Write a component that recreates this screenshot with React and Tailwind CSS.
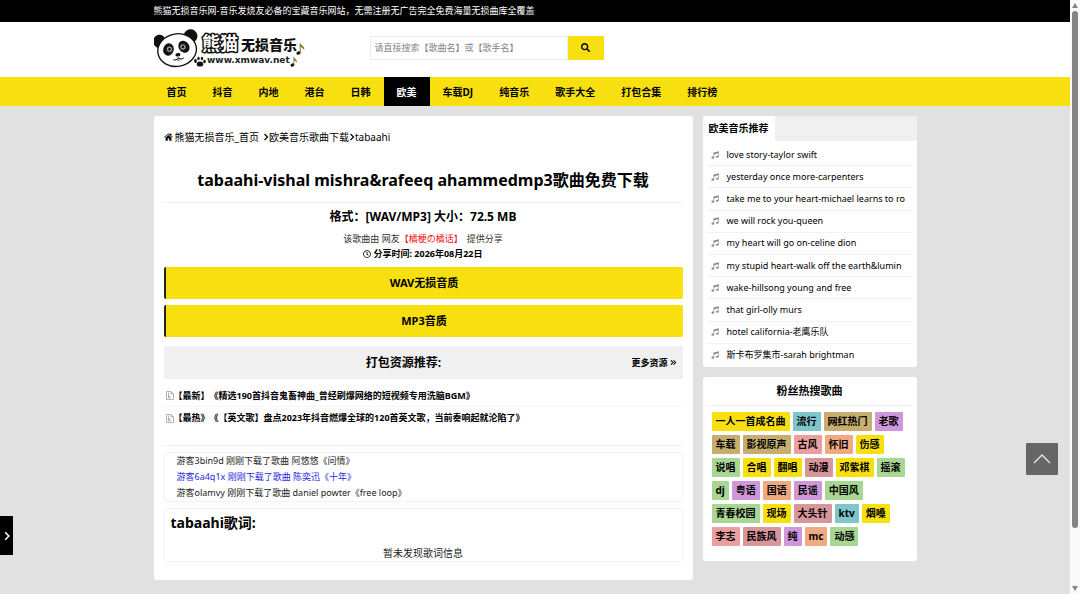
import { useState } from 'react';
import { FaSearch, FaRegClock } from 'react-icons/fa';

const navItems = ['首页', '抖音', '内地', '港台', '日韩', '欧美', '车载DJ', '纯音乐', '歌手大全', '打包合集', '排行榜'];

const packs = [
  '【最新】《精选190首抖音鬼畜神曲_曾经刷爆网络的短视频专用洗脑BGM》',
  '【最热》《【英文歌】盘点2023年抖音燃爆全球的120首英文歌，当前奏响起就沦陷了》',
];

const downloads = [
  { text: '游客3bin9d 刚刚下载了歌曲 阿悠悠《问情》', color: 'text-[#222222]' },
  { text: '游客6a4q1x 刚刚下载了歌曲 陈奕迅《十年》', color: 'text-[#2a1fe0]' },
  { text: '游客olamvy 刚刚下载了歌曲 daniel powter《free loop》', color: 'text-[#222222]' },
];

const songs = [
  'love story-taylor swift',
  'yesterday once more-carpenters',
  'take me to your heart-michael learns to ro',
  'we will rock you-queen',
  'my heart will go on-celine dion',
  'my stupid heart-walk off the earth&lumin',
  'wake-hillsong young and free',
  'that girl-olly murs',
  'hotel california-老鹰乐队',
  '斯卡布罗集市-sarah brightman',
];

const yellow = 'bg-[#f8df0f]';
const teal = 'bg-[#7fc5cc]';
const tan = 'bg-[#c8ae6e]';
const violet = 'bg-[#cf97d9]';
const pink = 'bg-[#eba09f]';
const orange = 'bg-[#efaa82]';
const green = 'bg-[#a8d693]';
const rose = 'bg-[#d8959a]';

const tags = [
  ['一人一首成名曲', yellow], ['流行', teal], ['网红热门', tan], ['老歌', violet],
  ['车载', tan], ['影视原声', tan], ['古风', pink], ['怀旧', orange], ['伤感', yellow],
  ['说唱', green], ['合唱', yellow], ['翻唱', yellow], ['动漫', rose], ['邓紫棋', yellow], ['摇滚', green],
  ['dj', green], ['粤语', violet], ['国语', orange], ['民谣', violet], ['中国风', green],
  ['青春校园', green], ['现场', yellow], ['大头针', rose], ['ktv', teal], ['烟嗓', yellow],
  ['李志', pink], ['民族风', rose], ['纯', violet], ['mc', orange], ['动感', green],
];

function Logo() {
  return (
    <svg viewBox="0 0 154 42" className="h-[42px] w-[154px]" role="img" aria-label="熊猫无损音乐">
      {/* panda head */}
      <g transform="translate(0 -2) scale(1.05) rotate(-10 22 22)">
        <ellipse cx="7" cy="11" rx="6" ry="6.5" fill="#111" />
        <ellipse cx="37" cy="11" rx="6.5" ry="6.5" fill="#111" />
        <ellipse cx="22" cy="22" rx="18.5" ry="15.5" fill="#fff" stroke="#111" strokeWidth="1.3" />
        <ellipse cx="14" cy="20" rx="5" ry="6" fill="#111" transform="rotate(25 14 20)" />
        <ellipse cx="29" cy="20" rx="5" ry="6" fill="#111" transform="rotate(-25 29 20)" />
        <circle cx="15" cy="20" r="2.6" fill="#999" />
        <circle cx="28" cy="20" r="2.6" fill="#999" />
        <circle cx="15" cy="20" r="1.3" fill="#111" />
        <circle cx="28" cy="20" r="1.3" fill="#111" />
        <ellipse cx="22" cy="26.5" rx="2.4" ry="1.7" fill="#111" />
        <path d="M17 30.5q2.5 1.5 5-1q2.5 2.5 5 1" fill="none" stroke="#111" strokeWidth="0.9" />
        <path d="M20 31.3q2 2.2 4 0z" fill="#e2474b" />
      </g>
      {/* paw */}
      <g fill="#111">
        <ellipse cx="46" cy="35" rx="3.3" ry="2.6" />
        <ellipse cx="41.5" cy="32" rx="1.4" ry="1.9" />
        <ellipse cx="44.5" cy="29.5" rx="1.2" ry="1.8" />
        <ellipse cx="48" cy="29.5" rx="1.2" ry="1.8" />
        <ellipse cx="50.5" cy="32.5" rx="1.3" ry="1.7" />
      </g>
      <g fontFamily="'Noto Sans CJK SC', sans-serif">
        <text x="48" y="21" fontSize="18" fontWeight="700" fill="#fff" stroke="#111" strokeWidth="3" strokeLinejoin="round" paintOrder="stroke">熊猫</text>
        <text x="87" y="21" fontSize="14" fontWeight="900" fill="#111">无损音乐</text>
      </g>
      <text x="53" y="34" fontSize="9" fontWeight="700" fontFamily="'DejaVu Sans', sans-serif" fill="#222">www.xmwav.net</text>
      {/* notes */}
      <g fill="#111">
        <ellipse cx="144.5" cy="24" rx="2.2" ry="1.6" transform="rotate(-20 144.5 24)" />
        <path d="M145.7 24V13.500c1 3 5.500 3.500 4.500 8-.5-2-2-3-3.500-3.500V24z" fill="#7a7526" />
        <ellipse cx="138.5" cy="36" rx="2" ry="1.5" transform="rotate(-20 138.5 36)" />
        <path d="M139.5 36v-8.500c1 2.500 4 3 3.300 6.500-.4-1.500-1.400-2.200-2.500-2.600V36z" fill="#7a7526" />
      </g>
    </svg>
  );
}

function HomeIcon() {
  return (
    <svg viewBox="0 0 18 16" className="h-2 w-[9px] shrink-0" fill="#111" aria-hidden="true">
      <path d="M9 4.200l6 5V15a.7.700 0 0 1-.7.700h-3.900v-4.500H7.600v4.500H3.700A.7.700 0 0 1 3 15V9.200z" />
      <path d="M9 .5l3.200 2.700V1h2.600v4.400l3 2.500-1 1.200L9 2.600 1.200 9.100l-1-1.200z" />
    </svg>
  );
}

function AngleIcon({ className }) {
  return (
    <svg viewBox="0 0 6 8" className={className} fill="none" stroke="currentColor" strokeWidth="1.2" aria-hidden="true">
      <path d="M1.500 1l3 3-3 3" />
    </svg>
  );
}

function DoubleAngleIcon() {
  return (
    <svg viewBox="0 0 8 8" className="size-[7px] shrink-0" fill="none" stroke="currentColor" strokeWidth="1.2" aria-hidden="true">
      <path d="M1 1.500L3.500 4 1 6.500M4 1.500L6.500 4 4 6.500" />
    </svg>
  );
}

function NoteIcon() {
  return (
    <svg viewBox="0 0 16 16" className="size-2 shrink-0" aria-hidden="true">
      <path d="M5.200 3.200L15.500.6v3.600L5.200 6.800z" fill="#8a8a8a" />
      <path d="M5.800 4v9M14.900 2v9" stroke="#8a8a8a" strokeWidth="1.3" />
      <ellipse cx="3.6" cy="13.3" rx="2.8" ry="2.1" fill="#8a8a8a" />
      <ellipse cx="12.7" cy="11.4" rx="2.8" ry="2.1" fill="#8a8a8a" />
    </svg>
  );
}

function FileIcon() {
  return (
    <svg viewBox="0 0 16 18" className="h-[9px] w-2 shrink-0" fill="none" stroke="#999" strokeWidth="1.5" aria-hidden="true">
      <path d="M1 1h9l5 5v11H1z" />
      <path d="M10 1v5h5M5 3v7M5 10h3v4H5z" />
    </svg>
  );
}

function Scrollbar() {
  return (
    <div className="sticky top-0 flex h-screen w-[10px] shrink-0 flex-col items-center justify-between bg-[#fafafa] py-[3px]" aria-hidden="true">
      <svg viewBox="0 0 6 5" className="h-[5px] w-1.5" fill="#858585"><path d="M3 0l3 5H0z" /></svg>
      <div className="mt-[3px] mb-auto h-[88%] w-1.5 rounded-full bg-[#858585]" />
      <svg viewBox="0 0 6 5" className="h-[5px] w-1.5" fill="#858585"><path d="M3 5L0 0h6z" /></svg>
    </div>
  );
}

export default function App() {
  const [keyword, setKeyword] = useState('');

  return (
    <div className="flex min-h-screen bg-[#e1e1e1] font-['Noto_Sans','Noto_Sans_CJK_SC',sans-serif] text-[9px] leading-4 text-black [text-spacing-trim:space-all]">
      <div className="min-w-0 flex-1">
        <div className="bg-black">
          <p className="mx-auto max-w-[763px] leading-[22px] text-white">熊猫无损音乐网-音乐发烧友必备的宝藏音乐网站，无需注册无广告完全免费海量无损曲库全覆盖</p>
        </div>

        <header className="bg-white">
          <div className="mx-auto flex h-[55px] max-w-[763px] items-center">
            <a href="#" className="mr-[62px]"><Logo /></a>
            <form className="mb-1 flex h-6 w-[234px]" onSubmit={(e) => e.preventDefault()}>
              <input
                type="text"
                aria-label="搜索"
                value={keyword}
                onChange={(e) => setKeyword(e.target.value)}
                placeholder="请直接搜索【歌曲名】或【歌手名】"
                className="min-w-0 flex-1 border border-[#ececec] px-1 placeholder:text-[#858585]"
              />
              <button type="submit" aria-label="搜索" className="flex w-9 items-center justify-center rounded-r-[1px] bg-[#f8df0f]">
                <FaSearch className="size-[9px]" />
              </button>
            </form>
          </div>
        </header>

        <nav className="bg-[#f8df0f]">
          <ul className="mx-auto flex max-w-[763px] text-[10px] leading-[27px] font-bold">
            {navItems.map((item) => (
              <li key={item}>
                <a href="#" className={item === '欧美' ? 'block bg-black px-[13px] pt-0.5 text-white' : 'block px-[13px] pt-0.5'}>{item}</a>
              </li>
            ))}
          </ul>
        </nav>

        <div className="mx-auto flex max-w-[763px] items-start gap-[10px] py-[10px]">
          <main className="min-w-0 flex-1 rounded-[3px] bg-white px-[10px] pt-3 pb-[18px]">
            <div className="flex items-center text-[10px] leading-[18px]">
              <HomeIcon />
              <a href="#" className="ml-0.5">熊猫无损音乐_首页</a>
              <AngleIcon className="ml-1 h-2 w-1.5" />
              <a href="#">欧美音乐歌曲下载</a>
              <AngleIcon className="h-2 w-1.5" />
              <span>tabaahi</span>
            </div>

            <h1 className="mt-3 border-b border-[#efefef] text-center text-[16px] leading-[44px] font-bold">tabaahi-vishal mishra&amp;rafeeq ahammedmp3歌曲免费下载</h1>

            <div className="pt-1 text-center leading-[15px]">
              <p className="text-[12px] leading-5 font-bold">格式：[WAV/MP3] 大小：72.5 MB</p>
              <p className="mt-1 text-[#333333]">
                该歌曲由 网友<span className="text-[#f51414]">【橘梗の橘话】</span>
                <span className="ml-1">提供分享</span>
              </p>
              <p className="flex items-center justify-center gap-0.5 font-bold">
                <FaRegClock className="size-2" />分享时间: 2026年08月22日
              </p>
            </div>

            <div className="mt-1.5 space-y-1.5">
              {['WAV无损音质', 'MP3音质'].map((label) => (
                <button key={label} type="button" className="block h-8 w-full rounded-[2px] border-l-2 border-[#222222] bg-[#f8df0f] text-[11px] font-bold">{label}</button>
              ))}
            </div>

            <div className="mt-[9px] flex h-[33px] items-center bg-[#f0f0f0] pr-1.5 pl-3 font-bold">
              <h2 className="flex-1 text-center text-[12px]">打包资源推荐:</h2>
              <a href="#" className="flex items-center gap-0.5">更多资源<DoubleAngleIcon /></a>
            </div>

            <ul className="mt-1.5 border-b border-[#efefef] pb-4 font-bold">
              {packs.map((pack) => (
                <li key={pack} className="flex h-[22px] items-center border-b border-[#f6f6f6] pl-0.5 last:border-b-0">
                  <FileIcon />
                  <a href="#" className="truncate">{pack}</a>
                </li>
              ))}
            </ul>

            <ul className="mt-1.5 rounded-[3px] border border-[#f3f3f3] px-3">
              {downloads.map((item) => (
                <li key={item.text} className={item.color}>{item.text}</li>
              ))}
            </ul>

            <section className="mt-1.5 rounded-[3px] border border-[#f3f3f3] px-1.5">
              <h3 className="text-[14px] leading-7 font-bold">tabaahi歌词:</h3>
              <p className="mt-2 text-center text-[10px] text-[#222222]">暂未发现歌词信息</p>
            </section>
          </main>

          <aside className="w-[214px] shrink-0 space-y-[10px]">
            <section className="rounded-[3px] bg-white pb-px">
              <div className="flex rounded-t-[3px] bg-[#f0f0f0]">
                <h2 className="rounded-tl-[3px] bg-white px-1.5 text-[10px] leading-[25px] font-bold">欧美音乐推荐</h2>
              </div>
              <ul className="grid h-[225px] auto-rows-fr px-1 pt-[3px]">
                {songs.map((song) => (
                  <li key={song} className="flex items-center gap-2 border-b border-[#f3f3f3] pl-1 last:border-b-0">
                    <NoteIcon />
                    <a href="#" className="whitespace-nowrap">{song}</a>
                  </li>
                ))}
              </ul>
            </section>

            <section className="rounded-[3px] bg-white px-[5px] pb-[15px]">
              <h2 className="border-b border-[#efefef] text-center text-[11px] leading-7 font-bold">粉丝热搜歌曲</h2>
              <div className="flex flex-wrap gap-x-[3px] gap-y-1 pt-1.5 pl-1 text-[10px] leading-[19px] font-bold">
                {tags.map(([name, color]) => (
                  <a key={name} href="#" className={`rounded-[1px] px-1 ${color}`}>{name}</a>
                ))}
              </div>
            </section>
          </aside>
        </div>
      </div>

      <Scrollbar />

      <button type="button" aria-label="展开" className="fixed bottom-[39px] left-0 flex h-[39px] w-[13px] items-center justify-center bg-black text-white">
        <AngleIcon className="h-[10px] w-2" />
      </button>
      <button type="button" aria-label="返回顶部" className="fixed right-[22px] bottom-[119px] flex size-8 items-center justify-center rounded-[1px] bg-[#666666]">
        <svg viewBox="0 0 18 10" className="h-[10px] w-[18px]" fill="none" stroke="#e8e8e8" strokeWidth="1.3"><path d="M1 9l8-8 8 8" /></svg>
      </button>
    </div>
  );
}
